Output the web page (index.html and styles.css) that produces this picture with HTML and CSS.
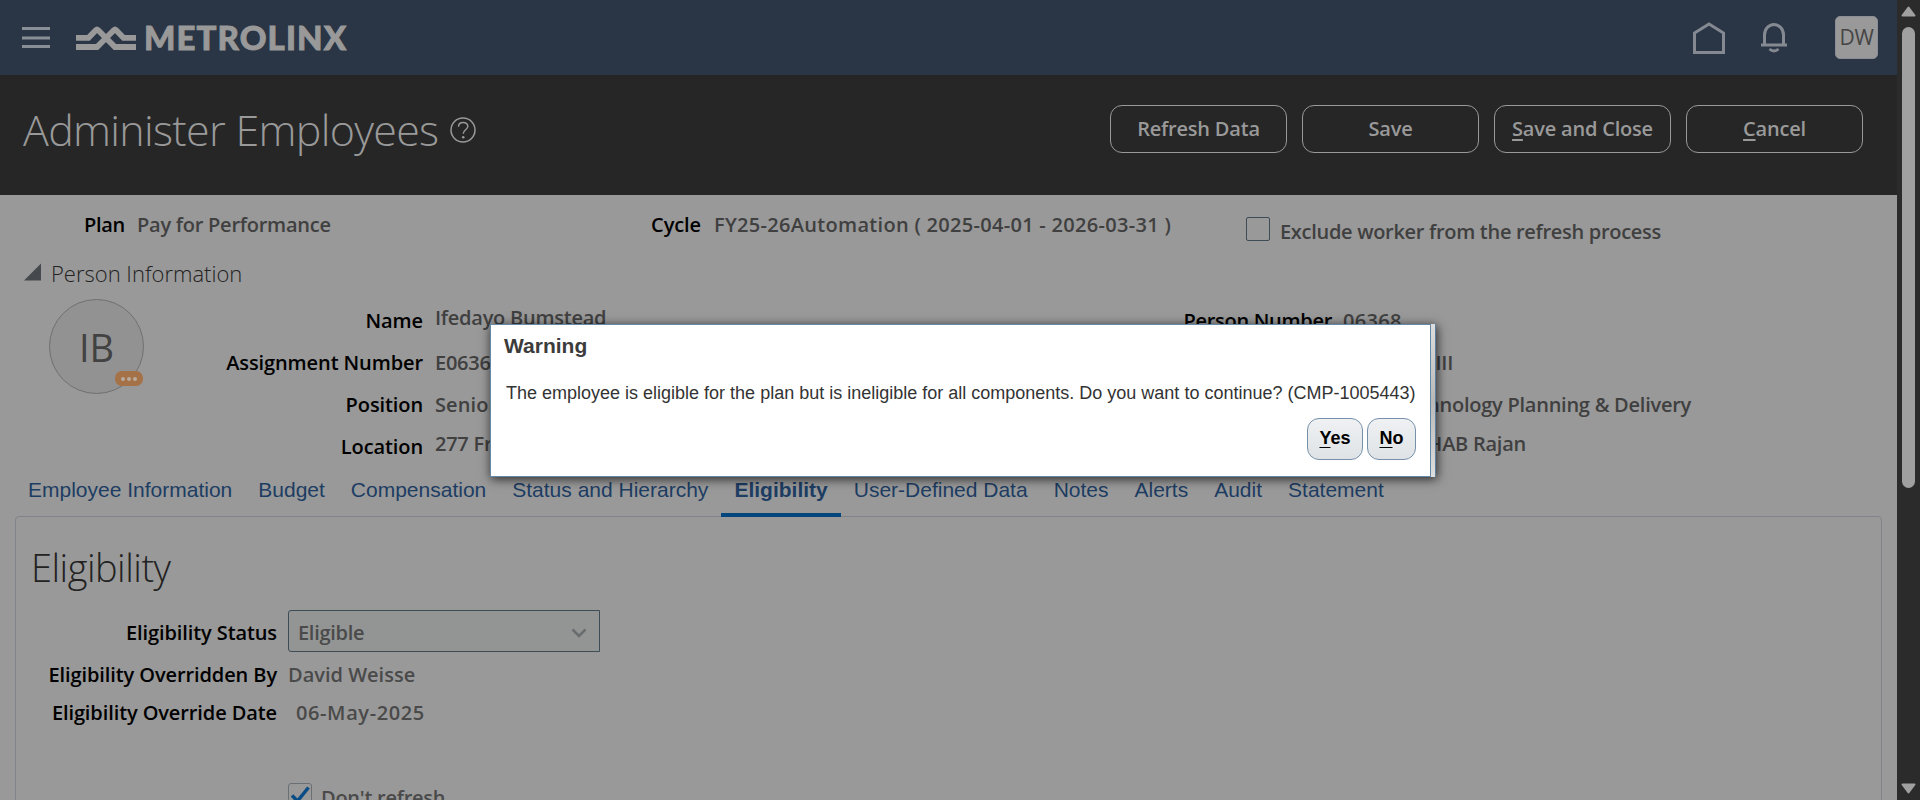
FILE: index.html
```html
<!DOCTYPE html>
<html lang="en">
<head>
<meta charset="utf-8">
<title>Administer Employees</title>
<link rel="stylesheet" href="styles.css">
</head>
<body>
<div class="page">
  <header class="topbar">
    <svg class="menu" width="28" height="22" viewBox="0 0 28 22"><path d="M0 1.500h28M0 11h28M0 19.500h28"/></svg>
    <svg class="wave" width="61" height="26" viewBox="0 0 61 26"><path d="M0 12.800H12.500L20 5Q21 4 22 5L39 22H60M0 22H21L38 5Q39 4 40 5L47.500 12.800H60"/></svg>
    <span class="brand">METROLINX</span>
    <div class="top-actions">
      <svg class="home" width="34" height="34" viewBox="0 0 34 34"><path d="M2.500 12 17 3 31.500 12V31.500H2.500Z"/></svg>
      <svg class="bell" width="28" height="32" viewBox="0 0 28 32"><path d="M1 23H27M4.500 22.500V13a9.500 10.500 0 0 1 19 0V22.500M9.500 27q4.500 4 9 0"/></svg>
      <span class="user">DW</span>
    </div>
  </header>
  <div class="titlebar">
    <h1 class="title">Administer Employees</h1>
    <svg class="help" width="26" height="26" viewBox="0 0 26 26"><circle cx="13" cy="13" r="12"/><path d="M8.500 9.800C8.500 4 17.800 4.200 17.800 9.300C17.800 12.800 13.200 12.800 13.200 16.800"/><circle class="dot" cx="13.200" cy="20.300" r="1.300"/></svg>
    <div class="actions">
      <button class="btn btn-refresh">Refresh Data</button>
      <button class="btn">Save</button>
      <button class="btn"><span><u>S</u>ave and Close</span></button>
      <button class="btn"><span><u>C</u>ancel</span></button>
    </div>
  </div>
  <main class="content">
    <div class="summary">
      <span class="label plan-label">Plan</span><span class="value plan">Pay for Performance</span>
      <span class="label cycle-label">Cycle</span><span class="value cycle">FY25-26Automation ( 2025-04-01 - 2026-03-31 )</span>
      <span class="box"></span><span class="value exclude">Exclude worker from the refresh process</span>
    </div>
    <div class="section-head">
      <svg width="18" height="18" viewBox="0 0 18 18"><path d="M0 17.500 17 .5V17.500Z" fill="#45494d"/></svg>
      <h2 class="section-title">Person Information</h2>
    </div>
    <div class="person">
      <div class="avatar">IB<span class="status"><i></i><i></i><i></i></span></div>
      <div class="grid left">
        <span class="label">Name</span><span class="value up">Ifedayo Bumstead</span>
        <span class="label">Assignment Number</span><span class="value">E06368</span>
        <span class="label">Position</span><span class="value position">Senior</span>
        <span class="label">Location</span><span class="value up">277 Front</span>
      </div>
      <div class="grid right">
        <span class="label number-label">Person Number</span><span class="value number">06368</span>
        <span></span><span class="value tail tail-job">III</span>
        <span></span><span class="value tail tail-dept">Technology Planning &amp; Delivery</span>
        <span></span><span class="value tail tail-manager up">HAB Rajan</span>
      </div>
    </div>
    <nav class="tabs">
      <a class="tab">Employee Information</a><a class="tab">Budget</a><a class="tab">Compensation</a><a class="tab">Status and Hierarchy</a><a class="tab active">Eligibility</a><a class="tab">User-Defined Data</a><a class="tab">Notes</a><a class="tab">Alerts</a><a class="tab">Audit</a><a class="tab">Statement</a>
    </nav>
    <section class="panel">
      <h2 class="panel-title">Eligibility</h2>
      <div class="form">
        <span class="label first">Eligibility Status</span>
        <div class="select"><span>Eligible</span><svg width="16" height="10" viewBox="0 0 16 10"><path d="M1.500 1.500 8 8 14.500 1.500"/></svg></div>
        <span class="label">Eligibility Overridden By</span><span class="value soft owner">David Weisse</span>
        <span class="label">Eligibility Override Date</span><span class="value soft date">06-May-2025</span>
      </div>
      <div class="refresh">
        <span class="check"><svg width="20" height="20" viewBox="0 0 20 20"><path d="M2 10.500 7.500 16 18.500 2.500"/></svg></span>
        <span class="value soft">Don't refresh</span>
      </div>
    </section>
  </main>
</div>
<div class="scrollbar">
  <svg width="15" height="11" viewBox="0 0 15 11"><path d="M7.500 1.500 13.500 9.500H1.500Z"/></svg>
  <div class="thumb"></div>
  <svg class="down" width="15" height="11" viewBox="0 0 15 11"><path d="M1.500 1.500H13.500L7.500 9.500Z"/></svg>
</div>
<div class="dialog" role="dialog">
  <div class="dialog-body">
    <h3 class="dialog-title">Warning</h3>
    <p class="message">The employee is eligible for the plan but is ineligible for all components. Do you want to continue? (CMP-1005443)</p>
    <div class="dialog-actions">
      <button class="choice yes"><span><u>Y</u>es</span></button>
      <button class="choice no"><span><u>N</u>o</span></button>
    </div>
  </div>
</div>
</body>
</html>
```
FILE: styles.css
```css
* { box-sizing: border-box; }
body {
  margin: 0;
  width: 1920px;
  height: 800px;
  overflow: hidden;
  display: flex;
  background: #999;
  color: #404040;
  font-family: "Open Sans", "Noto Sans", sans-serif;
  font-size: 20px;
  line-height: 30px;
  white-space: nowrap;
}
h1, h2, h3, p { margin: 0; font-weight: 300; }
button { font: inherit; padding: 0; }
.page { width: 1897px; height: 800px; overflow: hidden; }

.topbar { height: 75px; background: #2a3545; display: flex; align-items: center; padding: 0 19px 0 22px; }
.menu { fill: none; stroke: #898f97; stroke-width: 3; margin-right: 26px; }
.wave { fill: none; stroke: #999; stroke-width: 5.800; margin-right: 8px; }
.brand { font: 900 33px/40px Lato, sans-serif; color: #999; letter-spacing: 1.1px; -webkit-text-stroke: 0.9px #999; margin: -2px 0 0 -1px; }
.top-actions { margin-left: auto; display: flex; align-items: center; }
.home { fill: none; stroke: #858a92; stroke-width: 3; margin-right: 34px; }
.bell { fill: none; stroke: #858a92; stroke-width: 3; margin-right: 47px; }
.user { width: 43px; height: 43px; border: 1px solid #8b8f95; border-radius: 5px; background: #999; color: #454545; font-size: 21px; line-height: 41px; text-align: center; letter-spacing: -0.3px; }

.titlebar { height: 120px; background: #262626; display: flex; padding: 30px 34px 0 24px; color: #999; }
.title { font-size: 43px; line-height: 56px; letter-spacing: -0.7px; width: 426px; margin: -3px 0 0 -1px; }
.help { margin: 12px 0 0 1px; fill: none; stroke: #999; stroke-width: 1.500; }
.help .dot { fill: #999; stroke: none; }
.actions { margin-left: auto; display: flex; gap: 15px; }
.btn { width: 177px; height: 48px; border: 1px solid #999; border-radius: 12px; background: none; color: #999; font-weight: 600; padding-bottom: 1px; letter-spacing: -0.2px; }
.btn-refresh { padding-bottom: 0; }
.btn u, .choice u { text-underline-offset: 3px; }

.label { color: #000; font-weight: 600; text-align: right; letter-spacing: -0.1px; }
.value { color: #404040; font-weight: 600; letter-spacing: -0.250px; }

.summary { height: 52px; padding-top: 15px; display: flex; }
.plan-label { width: 125px; margin-right: 12px; letter-spacing: -0.3px; }
.plan { width: 514px; }
.cycle-label { width: 50px; margin-right: 13px; }
.cycle { width: 532px; letter-spacing: 0.3px; }
.box { width: 24px; height: 24px; margin: 7px 10px 0 0; border: 1px solid #3e4c55; border-radius: 2px; }
.exclude { padding-top: 7px; letter-spacing: -0.3px; }

.section-head { height: 48px; display: flex; padding: 16px 0 0 24px; gap: 9px; }
.section-title { font-size: 22px; line-height: 30px; color: #222; margin-top: -5px; }

.person { display: flex; height: 184px; padding-left: 49px; }
.avatar { position: relative; width: 95px; height: 95px; margin-top: 4px; border: 1px solid #707070; border-radius: 50%; background: #929292; color: #424242; font-size: 38px; line-height: 95px; text-align: center; }
.status { position: absolute; right: 0; bottom: 7px; width: 28px; height: 15px; border-radius: 7px; background: #a57146; display: flex; align-items: center; justify-content: center; gap: 2px; }
.status i { width: 4px; height: 4px; border-radius: 50%; background: #b9ab9e; }
.grid { display: grid; grid-auto-rows: 42px; column-gap: 12px; padding-top: 11px; }
.left { grid-template-columns: 279px 601px; }
.right { grid-template-columns: 295px 360px; }
.up { margin-top: -3px; }
.position { letter-spacing: 0.1px; }
.number-label { letter-spacing: -0.3px; margin-right: -1px; }
.number { letter-spacing: 0.3px; }
.tail { text-align: right; }
.tail-job { padding-right: 250px; }
.tail-dept { padding-right: 12px; }
.tail-manager { padding-right: 177px; }

.tabs { display: flex; height: 37px; padding-left: 15px; font: 21px/21px "Liberation Sans", Arial, sans-serif; color: #1d3d63; }
.tab { padding: 0 13px; height: 38px; }
.tab.active { font-weight: 700; border-bottom: 4px solid #03457d; position: relative; }
.panel { width: 1867px; height: 400px; margin-left: 15px; border: 1px solid #808488; border-radius: 4px; }
.panel-title { font-size: 38px; line-height: 50px; padding: 25px 0 2px 15px; color: #222; letter-spacing: -0.5px; }
.form { display: grid; grid-template-columns: 261px 400px; column-gap: 11px; padding-top: 16px; grid-template-rows: 50px 38px 43px; }
.form .first { padding-top: 8px; }
.soft { color: #4a4a4a; }
.select { width: 312px; height: 42px; border: 1px solid #3e4c55; border-radius: 3px 0 0 3px; background: #939595; display: flex; align-items: center; justify-content: space-between; padding: 3px 12px 0 9px; color: #4a4a4a; font-weight: 600; letter-spacing: -0.3px; }
.select svg { fill: none; stroke: #686c6e; stroke-width: 2.500; }
.owner { letter-spacing: 0; }
.date { padding-left: 8px; letter-spacing: 0.6px; }
.refresh { display: flex; gap: 9px; padding: 42px 0 0 272px; }
.check { width: 24px; height: 24px; border: 1px solid #6b7074; border-radius: 3px; padding: 1px; }
.check svg { display: block; fill: none; stroke: #0a4c85; stroke-width: 3.500; }

.scrollbar { width: 23px; height: 800px; background: #2b2b2b; display: flex; flex-direction: column; align-items: center; padding: 6px 0; }
.scrollbar svg { fill: #a0a0a0; stroke: #a0a0a0; stroke-width: 2; stroke-linejoin: round; }
.thumb { width: 13px; height: 461px; margin-top: 10px; border-radius: 7px; background: #a0a0a0; }
.down { margin-top: auto; }

.dialog { position: absolute; left: 490px; top: 324px; width: 946px; height: 153px; padding-right: 4px; background: linear-gradient(#dedede, #b8b8b8 50%, #dedede); border-right: 1px solid #5f7f9b; box-shadow: 1px 2px 10px rgba(0, 0, 0, .75); font-family: "Liberation Sans", Arial, sans-serif; }
.dialog-body { height: 153px; border: 1px solid #6488a6; background: #fff; padding: 9px 14px 0 13px; }
.dialog-title { font-size: 21px; line-height: 23px; font-weight: 700; color: #3c3c3c; }
.message { font-size: 18px; line-height: 22px; font-weight: 400; color: #333; padding: 25px 0 0 2px; }
.dialog-actions { display: flex; justify-content: flex-end; gap: 4px; padding-top: 14px; }
.choice { height: 42px; border: 1px solid #7590a8; border-radius: 12px; background: linear-gradient(#eff1f3, #dfe3e6); color: #000; font-weight: 700; font-size: 18px; padding-bottom: 3px; }
.yes { width: 56px; }
.no { width: 49px; }
```
